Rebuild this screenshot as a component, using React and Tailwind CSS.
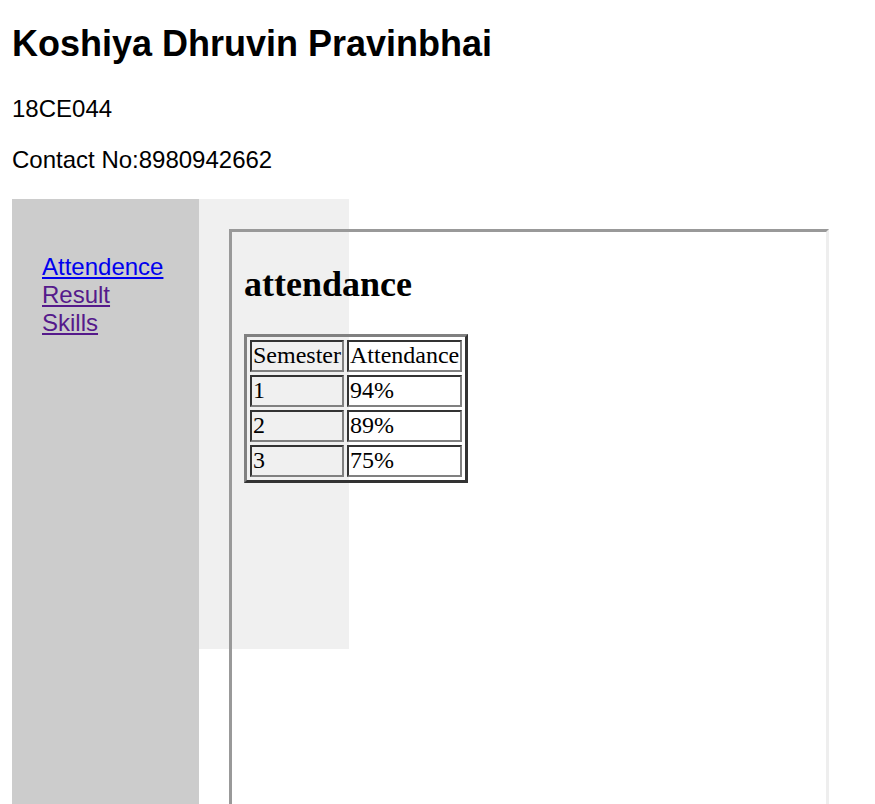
import React from 'react';

const rows = [
  ['Semester', 'Attendance'],
  ['1', '94%'],
  ['2', '89%'],
  ['3', '75%'],
];

const App = () => {
  return (
    <div className="h-[804px] overflow-hidden bg-white pl-3 font-['Liberation_Sans',Arial,sans-serif] text-black">
      <h1 className="pt-[23px] text-[36px] font-bold leading-[41px]">Koshiya Dhruvin Pravinbhai</h1>
      <p className="mt-[31px] text-[24px] leading-[28px]">18CE044</p>
      <p className="mt-[23px] text-[24px] leading-[28px]">Contact No:8980942662</p>

      <div className="mt-[25px] flex items-start">
        {/* sidebar nav */}
        <div className="flex h-[605px] w-[187px] shrink-0 flex-col items-start bg-[#cccccc] pl-[30px] pt-[54px] text-[24px] leading-[28px]">
          <a href="#" className="text-[#0000ee] underline">Attendence</a>
          <a href="#" className="text-[#551a8b] underline">Result</a>
          <a href="#" className="text-[#551a8b] underline">Skills</a>
        </div>

        {/* light box with the frame laid over it */}
        <div className="grid shrink-0">
          <div className="col-start-1 row-start-1 h-[450px] w-[150px] bg-[#f0f0f0]" />
          <div className="col-start-1 row-start-1 ml-[30px] mt-[30px] h-[590px] w-[600px] border-[3px] border-t-[#999999] border-l-[#999999] border-r-[#eeeeee] border-b-[#eeeeee] pl-[12px] pt-[32px] font-['Liberation_Serif','Times_New_Roman',serif]">
            <h2 className="text-[36px] font-bold leading-[41px]">attendance</h2>
            <table className="mt-[29px] border-separate border-spacing-[3px] border-[3px] border-t-[#808080] border-l-[#808080] border-r-[#333333] border-b-[#333333] text-[24px] leading-[26px]">
              <tbody>
                {rows.map((r, i) => (
                  <tr key={i}>
                    {r.map((c, j) => (
                      <td
                        key={j}
                        className="border-2 border-t-[#333333] border-l-[#333333] border-r-[#808080] border-b-[#808080] px-px pt-0 pb-[2px] text-left"
                      >
                        {c}
                      </td>
                    ))}
                  </tr>
                ))}
              </tbody>
            </table>
          </div>
        </div>
      </div>
    </div>
  );
};

export default App;
